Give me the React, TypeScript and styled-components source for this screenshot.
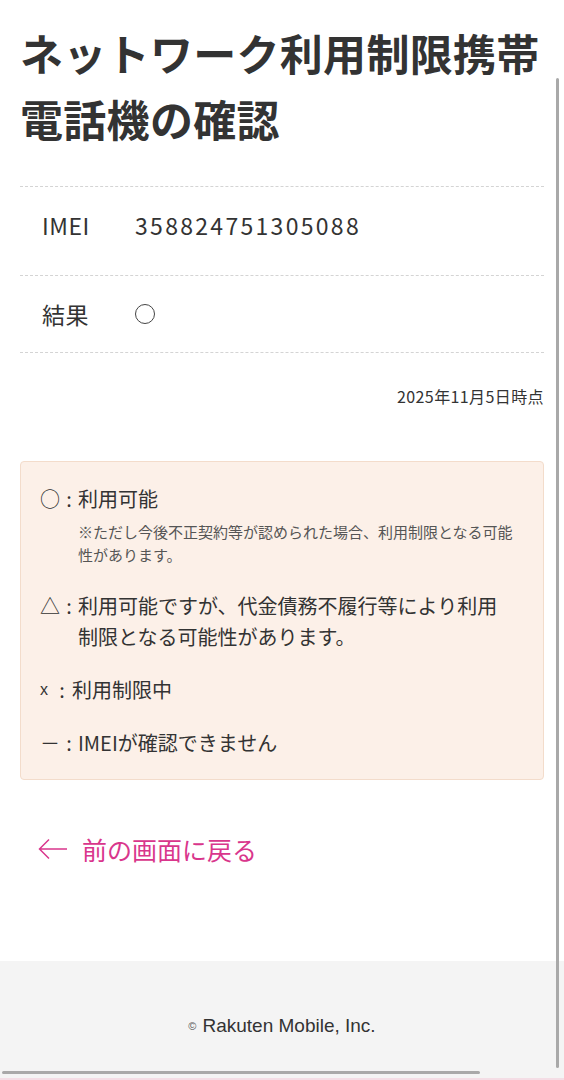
import React from 'react';
import styled, { createGlobalStyle } from 'styled-components';

const GlobalStyle = createGlobalStyle`
  html, body {
    margin: 0;
    padding: 0;
    background: #fff;
  }
  body {
    font-family: "Noto Sans CJK JP", "Noto Sans", sans-serif;
    color: #333;
  }
`;

const Page = styled.div`
  width: 564px;
  overflow: hidden;
`;

const Main = styled.main`
  padding: 19px 20px 0;
`;

const Title = styled.h1`
  margin: 0;
  font-size: 43px;
  line-height: 66px;
  font-weight: 700;
  color: #333;
  letter-spacing: 0.3px;
`;

const Table = styled.dl`
  margin: 35px 0 0;
  border-top: 1px dashed #d4d4d4;
`;

const Row = styled.div<{ $extra?: number }>`
  display: flex;
  align-items: center;
  padding: 22px 0 ${p => 22 + (p.$extra || 0)}px 22px;
  border-bottom: 1px dashed #d4d4d4;
  font-size: 23px;
  line-height: 32px;
`;

const Label = styled.dt`
  width: 93px;
  flex-shrink: 0;
  letter-spacing: 0.5px;
`;

const Value = styled.dd<{ $digits?: boolean }>`
  margin: 0;
  letter-spacing: ${p => (p.$digits ? '2.3px' : '0')};
`;

const Circle = styled.span`
  display: inline-block;
  width: 18px;
  height: 18px;
  border: 1.3px solid #444;
  border-radius: 50%;
  margin-top: 6px;
`;

const AsOf = styled.p`
  margin: 31px 0 0;
  text-align: right;
  font-size: 16px;
  line-height: 24px;
  letter-spacing: 0.4px;
`;

const Legend = styled.div`
  margin-top: 53px;
  padding: 21px 29px 21px 19px;
  background: #fcf0e8;
  border: 1px solid #f3dccb;
  border-radius: 4px;
`;

const Item = styled.div`
  display: flex;
  font-size: 20px;
  line-height: 31px;
  & + & {
    margin-top: 22px;
  }
`;

const Mark = styled.span<{ $latin?: boolean }>`
  flex-shrink: 0;
  width: ${p => (p.$latin ? '12px' : '20px')};
  font-family: ${p => (p.$latin ? '"Liberation Sans", sans-serif' : 'inherit')};
  font-size: ${p => (p.$latin ? '16px' : '20px')};
`;

const Sep = styled.span<{ $wide?: boolean }>`
  flex-shrink: 0;
  width: ${p => (p.$wide ? '20px' : '18px')};
  text-align: center;
`;

const ItemText = styled.div``;

const Note = styled.p`
  margin: 6px 0 24px;
  padding-left: 38px;
  font-size: 15px;
  line-height: 23px;
  color: #555;
  & + ${Item} {
    margin-top: 0;
  }
`;

const BackLink = styled.a`
  display: inline-flex;
  align-items: center;
  gap: 14px;
  margin: 51px 0 0 18px;
  color: #d9368c;
  font-size: 25px;
  line-height: 36px;
  text-decoration: none;
`;

const Footer = styled.footer`
  margin-top: 94px;
  padding: 53px 0 40px;
  background: #f4f4f4;
  border-bottom: 2px solid #f4dde5;
  text-align: center;
  font-family: "Liberation Sans", Arial, sans-serif;
  font-size: 19px;
  line-height: 24px;
  color: #333;
`;

const Copy = styled.span`
  font-size: 11px;
  vertical-align: 2px;
  margin-right: 6px;
  color: #555;
`;

const ScrollV = styled.div`
  position: fixed;
  left: 556px;
  top: 78px;
  width: 3px;
  height: 990px;
  border-radius: 2px;
  background: #a9a9a9;
`;

const ScrollH = styled.div`
  position: fixed;
  left: 2px;
  top: 1071px;
  width: 478px;
  height: 3px;
  border-radius: 2px;
  background: #a9a9a9;
`;

const ArrowLeft = () => (
  <svg width="30" height="22" viewBox="0 0 30 22" fill="none">
    <path d="M11 1.5 L1.5 11 L11 20.5 M1.5 11 H29" stroke="#d9368c" strokeWidth="1.5" />
  </svg>
);

export default function App() {
  return (
    <Page>
      <GlobalStyle />
      <Main>
        <Title>ネットワーク利用制限携帯電話機の確認</Title>
        <Table>
          <Row $extra={12}>
            <Label>IMEI</Label>
            <Value $digits>358824751305088</Value>
          </Row>
          <Row>
            <Label>結果</Label>
            <Value>
              <Circle />
            </Value>
          </Row>
        </Table>
        <AsOf>2025年11月5日時点</AsOf>
        <Legend>
          <Item>
            <Mark>○</Mark>
            <Sep>:</Sep>
            <ItemText>利用可能</ItemText>
          </Item>
          <Note>※ただし今後不正契約等が認められた場合、利用制限となる可能性があります。</Note>
          <Item>
            <Mark>△</Mark>
            <Sep>:</Sep>
            <ItemText>利用可能ですが、代金債務不履行等により利用制限となる可能性があります。</ItemText>
          </Item>
          <Item>
            <Mark $latin>x</Mark>
            <Sep $wide>:</Sep>
            <ItemText>利用制限中</ItemText>
          </Item>
          <Item>
            <Mark>－</Mark>
            <Sep>:</Sep>
            <ItemText>IMEIが確認できません</ItemText>
          </Item>
        </Legend>
        <BackLink href="#">
          <ArrowLeft />
          前の画面に戻る
        </BackLink>
      </Main>
      <Footer>
        <Copy>©</Copy>Rakuten Mobile, Inc.
      </Footer>
      <ScrollV />
      <ScrollH />
    </Page>
  );
}
